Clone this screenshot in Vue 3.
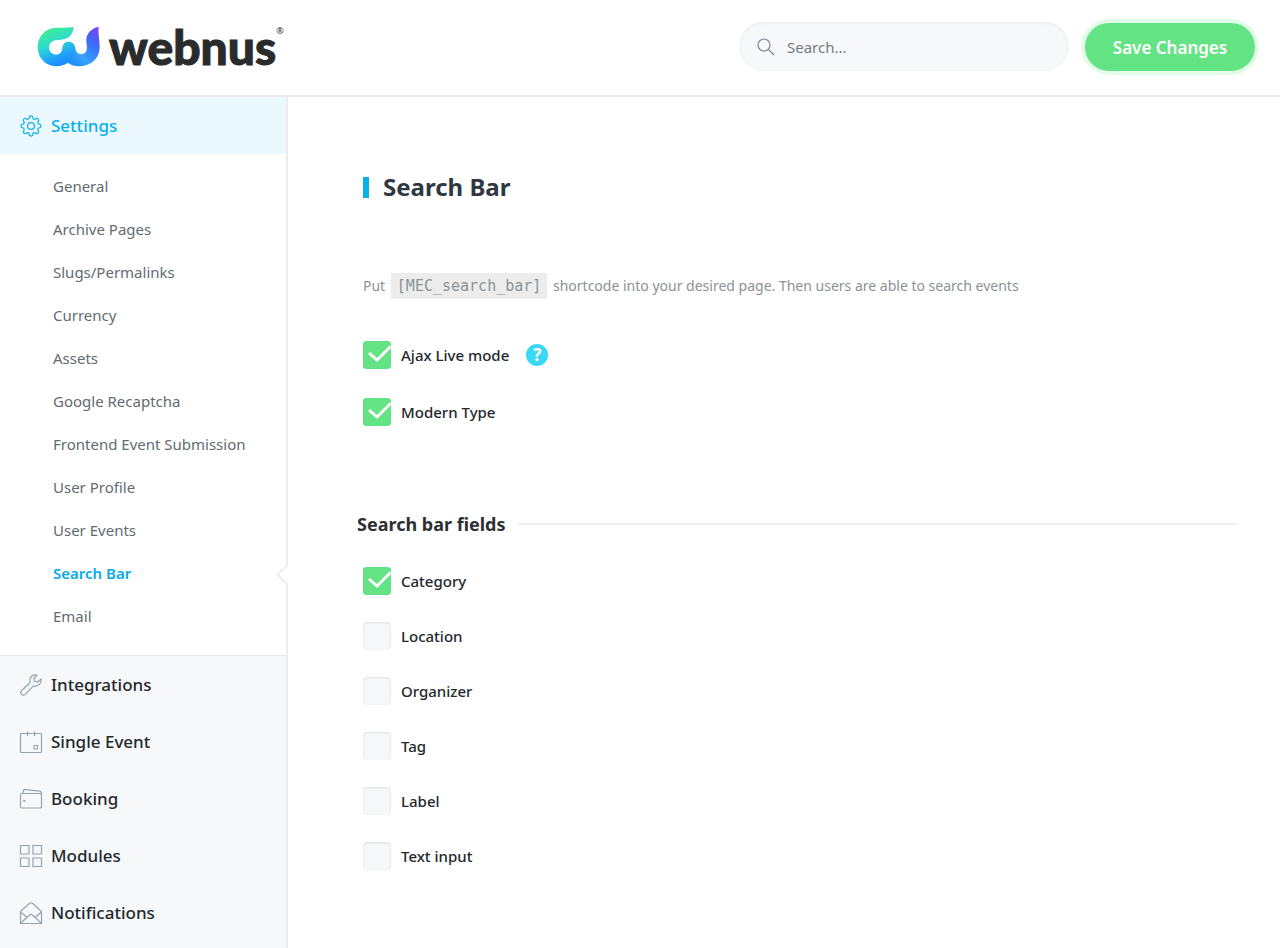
<template>
  <div class="page">
    <header class="topbar">
      <a class="logo" href="#" aria-label="webnus">
        <svg class="logo-mark" viewBox="22 18 188 122" aria-hidden="true">
          <defs>
            <linearGradient id="markLeft" x1="0.3" y1="0" x2="0.7" y2="1">
              <stop offset="0" stop-color="#3df08a" />
              <stop offset="0.4" stop-color="#2fdcd0" />
              <stop offset="0.75" stop-color="#1fa0fa" />
              <stop offset="1" stop-color="#1a86ff" />
            </linearGradient>
            <linearGradient id="markRight" x1="1" y1="0" x2="0.2" y2="1">
              <stop offset="0" stop-color="#8a3cf0" />
              <stop offset="0.35" stop-color="#3a6cf8" />
              <stop offset="0.7" stop-color="#35a5ff" />
              <stop offset="1" stop-color="#1a86ff" />
            </linearGradient>
          </defs>
          <path fill="url(#markRight)" d="M206 20 C184 25 170 40 169 58 C169 68 171 76 171 83 C171 95 164 102 154 102 C144 102 138 95 136 85 C133 73 127 66 115 66 L98 112 C112 130 128 139 150 138 C185 137 209 114 209 80 C209 58 204 43 206 20 Z" />
          <path fill="url(#markLeft)" d="M131 20 C110 24 98 22 78 23 C46 25 24 49 24 81 C24 113 49 138 80 138 C108 138 125 122 134 99 C141 79 131 65 116 65 C106 65 99 71 98 82 C97 95 91 103 79 103 C67 103 58 94 58 82 C58 70 67 61 78 60 C90 59 98 59 107 56 C121 51 130 40 131 20 Z" />
        </svg>
        <span class="logo-name">webnus</span>
        <span class="logo-reg">®</span>
      </a>

      <div class="topbar-actions">
        <label class="search">
          <svg viewBox="0 0 18 18" aria-hidden="true">
            <circle cx="7" cy="7" r="6" />
            <path d="M11.4 11.4 L17 17" />
          </svg>
          <input v-model="search" type="text" placeholder="Search..." aria-label="Search" />
        </label>
        <button type="button" class="save-btn">Save Changes</button>
      </div>
    </header>

    <div class="body">
      <aside class="sidebar">
        <a class="menu-item active" href="#">
          <svg viewBox="0 0 22 22" aria-hidden="true">
            <path :d="gearPath" />
            <circle cx="11" cy="11" r="3.4" />
          </svg>
          Settings
        </a>
        <ul class="submenu">
          <li v-for="item in subItems" :key="item" :class="{ current: item === current }">
            <a href="#" @click.prevent="current = item">{{ item }}</a>
          </li>
        </ul>
        <nav class="menu">
          <a v-for="item in menuItems" :key="item.name" class="menu-item" href="#">
            <svg viewBox="0 0 22 22" aria-hidden="true">
              <path v-for="d in item.paths" :key="d" :d="d" />
            </svg>
            {{ item.name }}
          </a>
        </nav>
      </aside>

      <main class="content">
        <h1>Search Bar</h1>
        <p class="description">
          Put <code>[MEC_search_bar]</code> shortcode into your desired page. Then users are able to search events
        </p>

        <div class="options">
          <div v-for="opt in options" :key="opt.id" class="option">
            <input :id="opt.id" v-model="opt.checked" type="checkbox" />
            <label :for="opt.id">{{ opt.label }}</label>
            <button v-if="opt.help" type="button" class="help" aria-label="Help">?</button>
          </div>
        </div>

        <h2>Search bar fields</h2>
        <div class="fields">
          <div v-for="field in fields" :key="field.id" class="option">
            <input :id="field.id" v-model="field.checked" type="checkbox" />
            <label :for="field.id">{{ field.label }}</label>
          </div>
        </div>
      </main>
    </div>
  </div>
</template>

<script setup>
import { ref } from 'vue';

const search = ref('');
const current = ref('Search Bar');

const subItems = [
  'General',
  'Archive Pages',
  'Slugs/Permalinks',
  'Currency',
  'Assets',
  'Google Recaptcha',
  'Frontend Event Submission',
  'User Profile',
  'User Events',
  'Search Bar',
  'Email'
];

// Engranaje de 8 dientes
const gearPath = (() => {
  const point = (r, deg) => {
    const a = (deg * Math.PI) / 180;
    return `${(11 + r * Math.cos(a)).toFixed(2)} ${(11 + r * Math.sin(a)).toFixed(2)}`;
  };
  let d = '';
  for (let i = 0; i < 8; i++) {
    const c = i * 45 - 90;
    d += `${i ? 'L' : 'M'}${point(8, c - 14)} L${point(9.6, c - 9)} Q${point(10.6, c)} ${point(9.6, c + 9)} L${point(8, c + 14)} Q${point(6.9, c + 22.5)} ${point(8, c + 31)} `;
  }
  return d + 'Z';
})();

const menuItems = [
  {
    name: 'Integrations',
    paths: [
      'M17 1.2 C13.5 -0.2 9.2 2.5 10 7.4 C10.1 8.4 9.8 8.9 9.2 9.5 L1.4 16.8 C-0.7 19 2.8 22.7 5 20.6 L12.4 12.8 C13 12.2 13.6 12 14.5 12.1 C18.8 12.5 22 9 21 5.1 L17.8 8 L14.6 7.3 L13.9 4.2 Z'
    ]
  },
  {
    name: 'Single Event',
    paths: ['M1.5 2.5 H20.5 Q21.5 2.5 21.5 3.5 V20.5 Q21.5 21.5 20.5 21.5 H1.5 Q0.5 21.5 0.5 20.5 V3.5 Q0.5 2.5 1.5 2.5 Z', 'M7.5 0.5 V5', 'M14.5 0.5 V5', 'M14 14.5 H17.5 V18 H14 Z']
  },
  {
    name: 'Booking',
    paths: ['M2 5.5 H20 Q21.5 5.5 21.5 7 V18.5 Q21.5 20 20 20 H2 Q0.5 20 0.5 18.5 V7 Q0.5 5.5 2 5.5 Z', 'M2.5 5.5 L4 1.5 L20 3.2 Q21.5 3.5 21.5 7', 'M3.8 12.5 H4.8 V13.2 H3.8 Z']
  },
  {
    name: 'Modules',
    paths: ['M0.5 0.5 H9 V9 H0.5 Z', 'M13 0.5 H21.5 V9 H13 Z', 'M0.5 13 H9 V21.5 H0.5 Z', 'M13 13 H21.5 V21.5 H13 Z']
  },
  {
    name: 'Notifications',
    paths: ['M0.5 9.5 L9.5 1.3 Q11 0.2 12.5 1.3 L21.5 9.5 V21.5 H0.5 Z', 'M0.5 10 L7 15.2 L0.5 21.5', 'M21.5 10 L15 15.2 L21.5 21.5', 'M7 15.2 L10 12.7 Q11 12 12 12.7 L15 15.2']
  }
];

const options = ref([
  { id: 'ajax', label: 'Ajax Live mode', checked: true, help: true },
  { id: 'modern', label: 'Modern Type', checked: true }
]);

const fields = ref([
  { id: 'category', label: 'Category', checked: true },
  { id: 'location', label: 'Location', checked: false },
  { id: 'organizer', label: 'Organizer', checked: false },
  { id: 'tag', label: 'Tag', checked: false },
  { id: 'label', label: 'Label', checked: false },
  { id: 'text-input', label: 'Text input', checked: false }
]);
</script>

<style>
body {
  margin: 0;
  background: #fff;
}
</style>

<style scoped>
.page {
  display: flex;
  flex-direction: column;
  min-height: 100vh;
  font-family: "Noto Sans", "Open Sans", sans-serif;
  font-size: 15px;
  color: #23282d;
}
a {
  color: inherit;
  text-decoration: none;
}
.topbar {
  display: flex;
  justify-content: space-between;
  align-items: center;
  box-sizing: border-box;
  height: 97px;
  padding: 0 25px 2px 37px;
  border-bottom: 2px solid #ebeced;
}
.logo {
  display: flex;
  align-items: center;
  color: #2a2b2d;
}
.logo-mark {
  width: 63px;
  height: 41px;
  margin-right: 9px;
}
.logo-name {
  font-family: Lato, sans-serif;
  font-weight: 900;
  font-size: 48px;
  line-height: 56px;
  -webkit-text-stroke: 1px #2a2b2d;
}
.logo-reg {
  align-self: flex-start;
  margin-top: 6px;
  font-size: 9px;
  line-height: 12px;
}
.topbar-actions {
  display: flex;
  align-items: flex-end;
  gap: 16px;
}
.search {
  display: flex;
  align-items: center;
  box-sizing: border-box;
  width: 330px;
  height: 49px;
  padding: 0 18px;
  gap: 12px;
  border-radius: 25px;
  background: #f7f8fa;
  box-shadow: inset 0 1px 3px rgba(0, 0, 0, 0.06);
}
.search svg {
  flex: none;
  width: 18px;
  height: 18px;
  fill: none;
  stroke: #7c8794;
  stroke-width: 1.2;
}
.search input {
  flex: 1;
  min-width: 0;
  padding: 0;
  border: 0;
  outline: 0;
  background: transparent;
  font: inherit;
  color: #6c757d;
}
.search input::placeholder {
  color: #757b82;
  opacity: 1;
}
.save-btn {
  width: 170px;
  height: 48px;
  border: 0;
  border-radius: 24px;
  background: #64e385;
  box-shadow: 0 0 0 4px #e2fde7;
  font: inherit;
  font-size: 17px;
  font-weight: 600;
  color: #fff;
}
.body {
  display: flex;
  flex: 1;
}
.sidebar {
  flex: none;
  box-sizing: border-box;
  width: 288px;
  border-right: 2px solid #ebedee;
  background: #f7f8fa;
}
.menu-item {
  display: flex;
  align-items: center;
  height: 57px;
  padding-left: 20px;
  gap: 9px;
  font-size: 17px;
  font-weight: 500;
}
.menu-item svg {
  width: 22px;
  height: 22px;
  fill: none;
  stroke: #96a3ae;
  stroke-width: 1.2;
  overflow: visible;
}
.menu-item.active {
  background: #ebf9fe;
  color: #07b2ea;
}
.menu-item.active svg {
  stroke: #07b2ea;
}
.submenu {
  margin: 0;
  padding: 11px 0 17px;
  border-bottom: 1px solid #e3e8e9;
  background: #fff;
  list-style: none;
}
.submenu li {
  position: relative;
  padding-left: 53px;
  line-height: 43px;
  color: #636b6f;
}
.submenu .current {
  font-weight: 600;
  color: #07a9e6;
}
/* Flecha que apunta al contenido */
.submenu .current::after {
  content: "";
  position: absolute;
  top: 15px;
  right: -9px;
  width: 14px;
  height: 14px;
  border-left: 1px solid #dcdfe1;
  border-bottom: 1px solid #dcdfe1;
  background: #fff;
  transform: rotate(45deg);
}
.content {
  flex: 1;
  min-width: 0;
  padding: 72px 44px 72px 75px;
}
h1 {
  display: flex;
  align-items: center;
  margin: 0;
  font-size: 24px;
  line-height: 36px;
  font-weight: 700;
  color: #2f3841;
}
h1::before {
  content: "";
  width: 6px;
  height: 21px;
  margin-right: 14px;
  background: #07b2ea;
}
.description {
  margin: 68px 0 42px;
  font-size: 14px;
  line-height: 26px;
  color: #8b9295;
}
.description code {
  display: inline-block;
  margin: 0 2px;
  padding: 0 6px;
  background: #ececec;
  font-family: "DejaVu Sans Mono", monospace;
  font-size: 15px;
}
.options {
  display: grid;
  gap: 29px;
}
.option {
  display: flex;
  align-items: center;
  height: 28px;
  font-weight: 500;
}
.option input {
  appearance: none;
  width: 28px;
  height: 28px;
  margin: 0 10px 0 0;
  border-radius: 4px;
  background: #f7f8fa;
  box-shadow: inset 0 1px 3px rgba(0, 0, 0, 0.1);
}
.option input:checked {
  background: #64e385;
  box-shadow: inset 0 0 1px #3fce6b;
}
.option input:checked::before {
  content: "";
  display: block;
  width: 28px;
  height: 28px;
  background: #fff;
  clip-path: polygon(7px 11px, 14px 17px, 27px 4px, 28px 7px, 14px 21px, 5px 13px);
}
.help {
  width: 22px;
  height: 22px;
  margin-left: 17px;
  padding: 0;
  border: 0;
  border-radius: 50%;
  background: #3bd8f5;
  font: inherit;
  font-size: 17px;
  font-weight: 700;
  line-height: 22px;
  color: #fff;
}
h2 {
  display: flex;
  align-items: center;
  gap: 12px;
  margin: 85px 0 30px -6px;
  font-size: 18px;
  line-height: 26px;
  font-weight: 700;
  color: #2d3033;
}
h2::after {
  content: "";
  flex: 1;
  height: 2px;
  background: #efefef;
}
.fields {
  display: grid;
  gap: 27px;
}
</style>
